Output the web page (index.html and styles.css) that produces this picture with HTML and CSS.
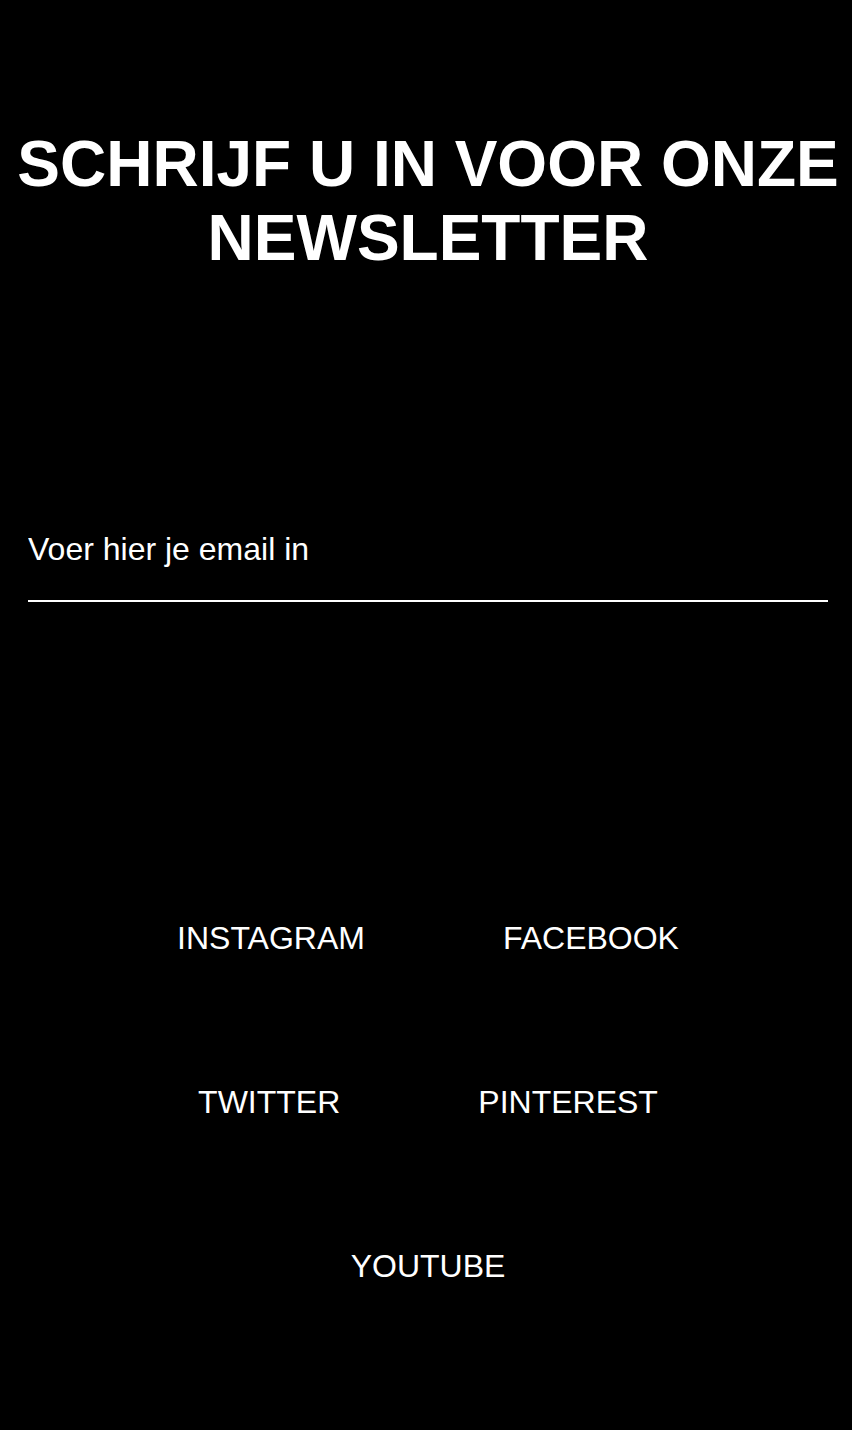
FILE: index.html
```html
<!DOCTYPE html>
<html lang="nl">
<head>
<meta charset="utf-8">
<title>Newsletter</title>
<link rel="stylesheet" href="styles.css">
</head>
<body>
<main class="page">
  <section class="hero">
    <h1 class="title">SCHRIJF U IN VOOR ONZE NEWSLETTER</h1>
  </section>
  <form class="signup">
    <input class="email" type="email" placeholder="Voer hier je email in">
  </form>
  <nav class="socials">
    <a class="social" href="#">INSTAGRAM</a>
    <a class="social" href="#">FACEBOOK</a>
    <a class="social" href="#">TWITTER</a>
    <a class="social" href="#">PINTEREST</a>
    <a class="social" href="#">YOUTUBE</a>
  </nav>
</main>
</body>
</html>
```
FILE: styles.css
```css
html, body {
  margin: 0;
  padding: 0;
  background: #000;
}
body {
  font-family: "Liberation Sans", Arial, Helvetica, sans-serif;
  color: #fff;
  min-height: 1430px;
}
.page {
  display: flex;
  flex-direction: column;
}
.hero {
  padding: 127px 0 0 4px;
}
.title {
  margin: 0;
  font-size: 64px;
  font-weight: 700;
  line-height: normal;
  text-align: center;
  color: #fff;
}
.signup {
  margin: 224px 0 0;
  padding-left: 28px;
}
.email {
  display: block;
  box-sizing: border-box;
  width: 800px;
  padding: 32px 0;
  margin: 0;
  border: 0;
  border-bottom: 2px solid #fff;
  background: transparent;
  color: #fff;
  font-family: "Liberation Sans", Arial, sans-serif;
  font-size: 32px;
  line-height: normal;
  outline: none;
}
.email::placeholder {
  color: #fff;
  opacity: 1;
}
.socials {
  margin-top: 254px;
  padding-left: 4px;
  display: flex;
  flex-wrap: wrap;
  justify-content: center;
}
.social {
  padding: 64px 69px;
  font-size: 32px;
  line-height: 36px;
  color: #fff;
  text-decoration: none;
}
```
